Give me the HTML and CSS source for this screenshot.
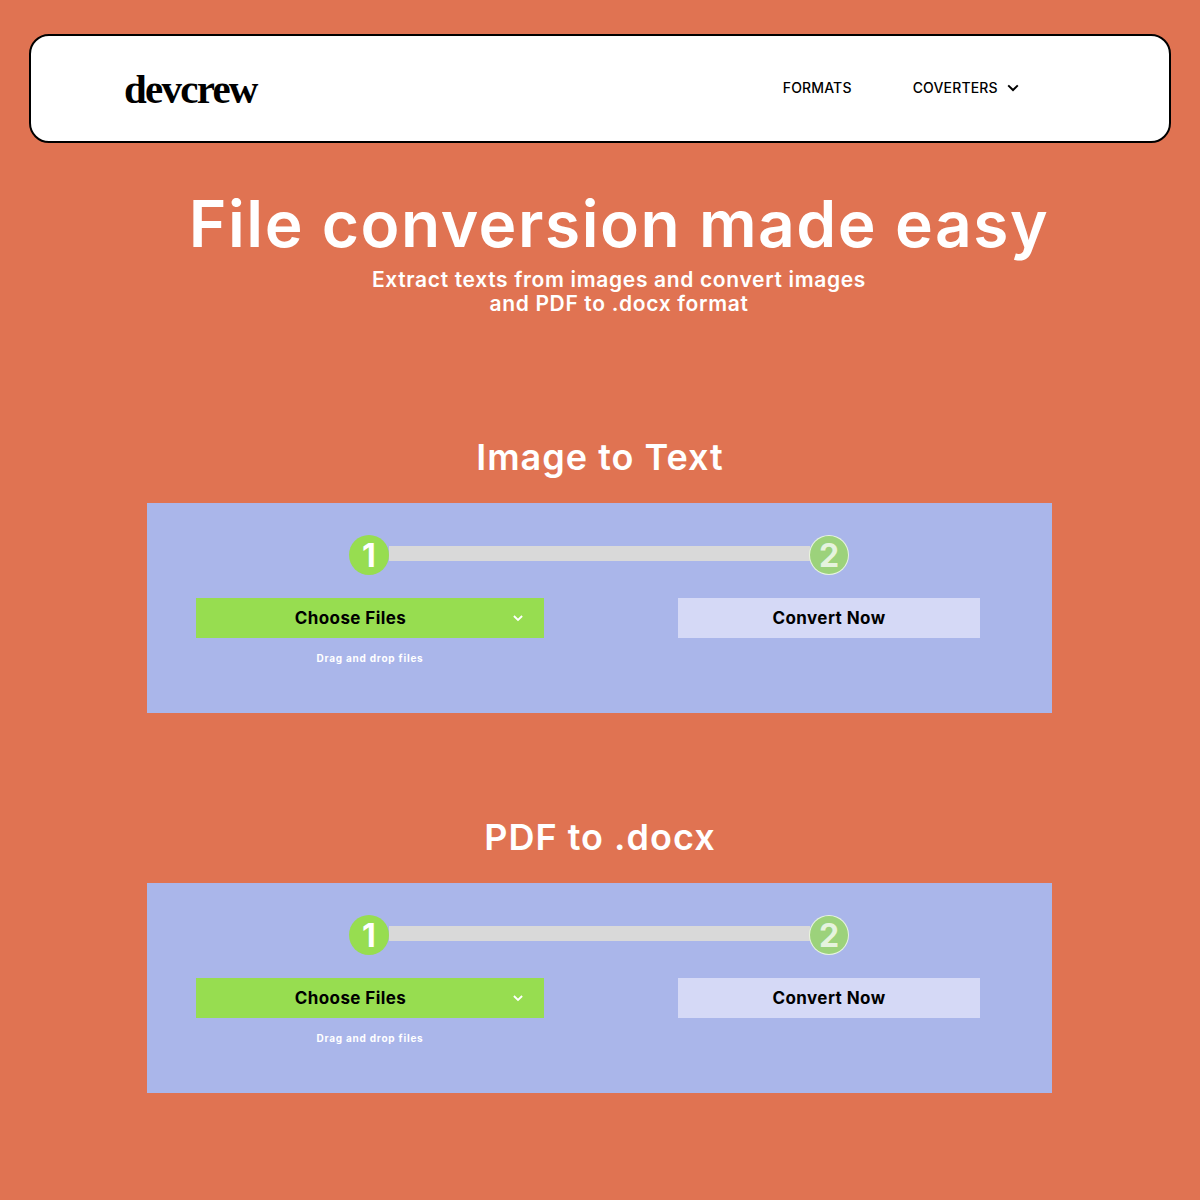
FILE: index.html
```html
<!DOCTYPE html>
<html lang="en">
<head>
<meta charset="utf-8">
<title>devcrew</title>
<link rel="stylesheet" href="styles.css">
</head>
<body>
<header class="nav">
  <div class="logo">devcrew</div>
  <nav class="links">
    <a class="link">FORMATS</a>
    <a class="link link-drop">COVERTERS
      <svg class="nav-chev" width="12" height="8" viewBox="0 0 12 8"><path d="M1.2 1.4 6 6 10.8 1.4" fill="none" stroke="#000" stroke-width="2"/></svg>
    </a>
  </nav>
</header>
<section class="hero">
  <h1>File conversion made easy</h1>
  <p>Extract texts from images and convert images<br>and PDF to .docx format</p>
</section>
<main>
  <section class="tool tool-first">
    <h2>Image to Text</h2>
    <div class="panel">
      <div class="stepper">
        <span class="step step-on">1</span>
        <span class="bar"></span>
        <span class="step step-off">2</span>
      </div>
      <div class="actions">
        <div class="pick">
          <button class="btn btn-choose">Choose Files
            <svg class="btn-chev" width="10" height="7" viewBox="0 0 10 7"><path d="M.9 1 5 5 9.1 1" fill="none" stroke="#fff" stroke-width="1.8"/></svg>
          </button>
          <div class="hint">Drag and drop files</div>
        </div>
        <button class="btn btn-convert">Convert Now</button>
      </div>
    </div>
  </section>
  <section class="tool">
    <h2>PDF to .docx</h2>
    <div class="panel">
      <div class="stepper">
        <span class="step step-on">1</span>
        <span class="bar"></span>
        <span class="step step-off">2</span>
      </div>
      <div class="actions">
        <div class="pick">
          <button class="btn btn-choose">Choose Files
            <svg class="btn-chev" width="10" height="7" viewBox="0 0 10 7"><path d="M.9 1 5 5 9.1 1" fill="none" stroke="#fff" stroke-width="1.8"/></svg>
          </button>
          <div class="hint">Drag and drop files</div>
        </div>
        <button class="btn btn-convert">Convert Now</button>
      </div>
    </div>
  </section>
</main>
</body>
</html>
```
FILE: styles.css
```css
* { box-sizing: border-box; }
html, body { margin: 0; padding: 0; }
body {
  height: 1200px;
  background: #e07352;
  font-family: Inter, "Open Sans", sans-serif;
  padding-top: 34px;
  overflow: hidden;
}
.nav {
  margin: 0 29px;
  height: 109px;
  background: #fff;
  border: 2px solid #000;
  border-radius: 20px;
  display: flex;
  align-items: center;
  padding-left: 93px;
}
.logo {
  font-family: "Liberation Serif", serif;
  font-weight: 700;
  font-size: 41px;
  letter-spacing: -1.75px;
  color: #000;
  line-height: 1;
  padding-top: 1px;
}
.links {
  margin-left: 526px;
  display: flex;
  gap: 61px;
  align-items: center;
  position: relative;
  top: -1px;
}
.link {
  font-size: 14px;
  font-weight: 500;
  color: #000;
  letter-spacing: .17px;
  display: flex;
  align-items: center;
}
.nav-chev { margin-left: 9px; }
.hero {
  margin-left: 38px;
  text-align: center;
  color: #fff;
  padding-top: 46px;
}
.hero h1 {
  margin: 0;
  font-size: 64px;
  font-weight: 600;
  line-height: 70px;
  letter-spacing: 1.55px;
}
.hero p {
  margin: 9px 0 0;
  font-size: 21px;
  font-weight: 600;
  line-height: 24px;
  letter-spacing: .66px;
}
.tool { margin-top: 102px; }
.tool-first { margin-top: 119px; }
.tool h2 {
  margin: 0 0 24px;
  text-align: center;
  color: #fff;
  font-size: 36px;
  font-weight: 600;
  line-height: 44px;
  letter-spacing: 1px;
}
.panel {
  width: 905px;
  height: 210px;
  margin-left: 147px;
  background: #aab6ea;
  padding-top: 32px;
}
.stepper {
  width: 500px;
  margin: 0 0 0 202px;
  display: flex;
  align-items: flex-start;
}
.step {
  width: 40px;
  height: 40px;
  border-radius: 50%;
  display: flex;
  align-items: center;
  justify-content: center;
  font-size: 32px;
  font-weight: 700;
  color: #fff;
  flex: none;
  position: relative;
}
.step-on { background: #97dd50; }
.step-off {
  background: rgba(151, 221, 80, .72);
  border: 1px solid rgba(255, 255, 255, .75);
  color: rgba(255, 255, 255, .75);
  margin-left: -1px;
}
.bar {
  flex: 1;
  height: 15px;
  margin-top: 11px;
  background: #d9d9d9;
}
.actions {
  display: flex;
  justify-content: space-between;
  align-items: flex-start;
  padding: 23px 72px 0 49px;
}
.pick { width: 348px; }
.btn {
  height: 40px;
  border: 0;
  padding-top: 1px;
  font-family: inherit;
  font-size: 17px;
  font-weight: 700;
  letter-spacing: .42px;
  color: #000;
  display: flex;
  align-items: center;
  justify-content: center;
  position: relative;
}
.btn-choose {
  width: 348px;
  background: #97dd50;
  padding-right: 45px;
}
.btn-chev {
  position: absolute;
  right: 21px;
  top: 17px;
}
.btn-convert {
  width: 302px;
  background: #d5d9f6;
}
.hint {
  margin-top: 13px;
  text-align: center;
  color: #fff;
  font-size: 10px;
  font-weight: 700;
  line-height: 14px;
  letter-spacing: .77px;
}
```
